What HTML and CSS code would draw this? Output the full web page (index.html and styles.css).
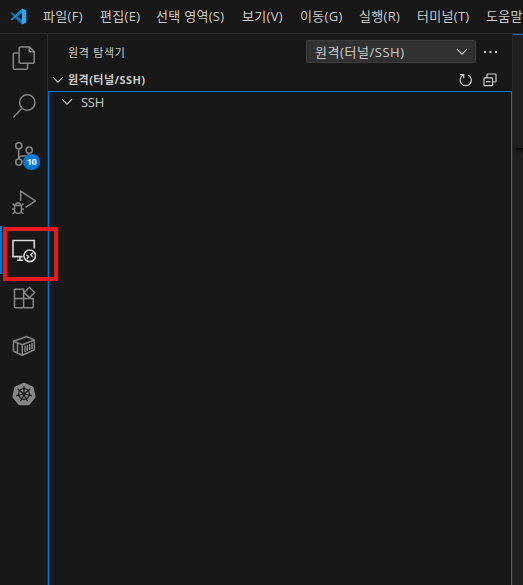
FILE: index.html
```html
<!DOCTYPE html>
<html lang="ko">
<head>
<meta charset="utf-8">
<title>원격 탐색기</title>
<link rel="stylesheet" href="styles.css">
</head>
<body>
<div class="window">
  <header class="titlebar">
    <svg class="logo" width="17" height="17" viewBox="0 0 17 17">
      <path d="M0.5 5.2 1.8 4.2 12 11.9V16.5z" fill="#0879bd"/>
      <path d="M0.5 11.4 1.8 12.5 12 4.8V.4z" fill="#168bd0"/>
      <path d="M12 .4 16.2 2.2V14.8L12 16.5z" fill="#2ca8f2"/>
    </svg>
    <nav class="menu">
      <span>파일(F)</span><span>편집(E)</span><span>선택 영역(S)</span><span>보기(V)</span><span>이동(G)</span><span>실행(R)</span><span>터미널(T)</span><span>도움말</span>
    </nav>
  </header>
  <div class="workbench">
    <aside class="activity">
      <div class="item">
        <svg width="24" height="24" viewBox="0 0 24 24"><path d="M8.2 1H17.5L22.2 5.5V16.3Q22.2 17.3 21.2 17.3H8.2Q7.2 17.3 7.2 16.3V2Q7.2 1 8.2 1zM17.2 1V5.8H22.2M7 7H2.3Q1.3 7 1.3 8V22.2Q1.3 23.2 2.3 23.2H14.5Q15.5 23.2 15.5 22.2V17.5"/></svg>
      </div>
      <div class="item">
        <svg width="24" height="24" viewBox="0 0 24 24"><circle cx="15.3" cy="8.5" r="7.7"/><path d="M10 14.2 1.2 23.4"/></svg>
      </div>
      <div class="item">
        <svg width="24" height="24" viewBox="0 0 24 24"><circle cx="6.8" cy="3.8" r="3.1"/><circle cx="6.8" cy="20.1" r="3.1"/><circle cx="17.2" cy="8.2" r="3.1"/><path d="M6.8 7V17M17.2 11.3Q16.8 14 13 14H10Q7.3 14 6.8 16.8"/></svg>
        <span class="badge">10</span>
      </div>
      <div class="item">
        <svg width="24" height="24" viewBox="0 0 24 24"><path d="M8.7 11V1.1L23.4 11 13.6 17.4"/><path d="M2.6 15.6H9.4V20Q9.4 23.4 6 23.4 2.6 23.4 2.6 20zM3.6 15.4Q3.8 12.8 6 12.8 8.2 12.8 8.4 15.4M0 19H2.5M9.5 19H12M.6 13.6 2.6 15.6M11.4 13.6 9.4 15.6M.6 23.8 3 21.8M11.4 23.8 9 21.8" stroke-width="1.5"/></svg>
      </div>
      <div class="item active">
        <svg width="24" height="24" viewBox="0 0 24 24"><path d="M10.7 17.6H1V1.5H22.3V9.5M5 21.3H11.2M8 17.8V21" stroke-width="1.6"/><circle cx="17.7" cy="16.8" r="5.8" stroke-width="1.6"/><path d="M14.5 15.7 16.7 17.8 14.7 20M20.8 13.7 18.7 15.8 20.8 18" stroke-width="1.3"/></svg>
        <span class="highlight"></span>
      </div>
      <div class="item">
        <svg width="24" height="24" viewBox="0 0 24 24"><path d="M2.5 3.3H11.6V21.8H3.5Q2.5 21.8 2.5 20.8zM2.5 12.6H21.2V20.8Q21.2 21.8 20.2 21.8H11.6M17.4 1.3 22.6 6.5 17.4 11.7 12.2 6.5z"/></svg>
      </div>
      <div class="item">
        <svg width="24" height="24" viewBox="0 0 24 24"><path d="M1.5 7.2 14.5 2.5 22.3 6V15.8L10.3 21.3 1.5 17.2zM1.5 7.2 10.3 10.8 22.3 6M10.3 10.8V21.3M5.5 8.9V19M13.1 11.8V18.1M15.4 10.9V17.1M17.7 10V16.1M20 9V15"/></svg>
      </div>
      <div class="item">
        <svg width="24" height="24" viewBox="0 0 24 24"><path class="kube" d="M12 .4 20.8 4.5Q21.4 4.9 21.6 5.6L23.8 15 17.8 22.6Q17.3 23.2 16.5 23.2H7.5Q6.7 23.2 6.2 22.6L.2 15 2.4 5.6Q2.6 4.9 3.2 4.5z"/><g class="wheel"><circle cx="12" cy="12" r="5.4"/><circle cx="12" cy="12" r="1"/><path d="M12 3.9V11M12 13 8.5 19.3M12 13 15.5 19.3M11 12 4.1 13.8M13 12 19.9 13.8M11.2 11.4 5.7 7M12.8 11.4 18.3 7"/></g></svg>
      </div>
    </aside>
    <main class="sidebar">
      <div class="heading">
        <span class="title">원격 탐색기</span>
        <div class="select"><span>원격(터널/SSH)</span><svg width="12" height="8" viewBox="0 0 12 8"><path d="M1 1.2 6 6.2 11 1.2"/></svg></div>
        <svg class="more" width="14" height="4" viewBox="0 0 14 4"><path d="M0 1H2V3H0zM5.5 1H7.5V3H5.5zM11 1H13V3H11z"/></svg>
      </div>
      <div class="section">
        <svg class="chevron" width="12" height="8" viewBox="0 0 12 8"><path d="M1 1.2 6 6.2 11 1.2"/></svg>
        <strong>원격(터널/SSH)</strong>
        <div class="actions">
          <svg width="14" height="14" viewBox="0 0 14 14"><path d="M1 1.6H4.7V5.2M4.4 2A5.6 5.6 0 1 0 9.2 2"/></svg>
          <svg width="14" height="14" viewBox="0 0 14 14"><path d="M4 4.3V1.7Q4 1 4.7 1H12.3Q13 1 13 1.7V8.3Q13 9 12.3 9H9.8M1.7 4.8H8.9Q9.6 4.8 9.6 5.5V12Q9.6 12.7 8.9 12.7H1.7Q1 12.7 1 12V5.5Q1 4.8 1.7 4.8zM3 8.7H7.6"/></svg>
        </div>
      </div>
      <div class="tree">
        <div class="row"><svg class="chevron" width="12" height="8" viewBox="0 0 12 8"><path d="M1 1.2 6 6.2 11 1.2"/></svg><span>SSH</span></div>
      </div>
    </main>
    <section class="editor"><div class="sticky"></div></section>
  </div>
</div>
</body>
</html>
```
FILE: styles.css
```css
* { box-sizing: border-box; }
body { margin: 0; background: #181818; overflow: hidden; font-family: "Open Sans", "Noto Sans CJK KR", sans-serif; font-size: 13px; color: #ccc; }
svg { display: block; flex: none; fill: none; stroke: #ccc; stroke-width: 1.2; }
.window { width: 523px; height: 585px; display: flex; flex-direction: column; overflow: hidden; }
.titlebar { height: 34px; flex: none; display: flex; align-items: center; border-bottom: 1px solid #2b2b2b; padding: 0 0 2px 10px; }
.logo { stroke: none; margin-top: 1px; }
.menu { display: grid; grid-template-columns: 57px 56px 86px 58px 59px 58px 69px 37px; margin-left: 16px; white-space: nowrap; font-size: 13px; line-height: 20px; letter-spacing: .3px; }
.workbench { display: flex; flex: 1; min-height: 0; }
.activity { width: 48px; flex: none; border-right: 1px solid #2b2b2b; }
.item { height: 48px; position: relative; display: flex; align-items: center; justify-content: center; }
.item svg { stroke: #868686; stroke-width: 1.5; }
.item.active { border-left: 2px solid #0078d4; padding: 1px 2px 0 0; }
.item.active svg { stroke: #d7d7d7; }
.badge { position: absolute; left: 23px; top: 24px; width: 17px; height: 16px; border-radius: 8px; background: #0078d4; color: #fff; font-size: 9px; font-weight: 700; letter-spacing: -.5px; line-height: 16px; text-align: center; }
.highlight { position: absolute; z-index: 2; left: 1px; top: 1px; width: 55px; height: 54px; border: 4px solid #e81919; }
.item .kube { fill: #868686; stroke: none; }
.wheel { stroke: #181818; stroke-width: 1.2; }
.sidebar { width: 464px; flex: none; display: flex; flex-direction: column; }
.heading { height: 35px; flex: none; display: flex; align-items: center; padding-left: 20px; }
.title { font-size: 11px; flex: 1; letter-spacing: .7px; }
.select { width: 170px; height: 23px; background: #313131; border: 1px solid #3c3c3c; border-radius: 2px; display: flex; align-items: center; justify-content: space-between; padding: 0 7px 0 8px; line-height: 20px; letter-spacing: .55px; }
.more { margin: 0 14px 0 8px; fill: #ccc; stroke: none; }
.section { height: 22px; flex: none; display: flex; align-items: center; padding: 0 15px 0 4px; }
.section strong { font-size: 11px; line-height: 16px; margin-left: 4px; padding-bottom: 1px; flex: 1; letter-spacing: .45px; }
.actions { display: flex; gap: 10px; }
.tree { flex: 1; border: 1px solid #0078d4; border-bottom: 0; }
.row { height: 20px; display: flex; align-items: center; padding-left: 12px; gap: 8px; letter-spacing: -.3px; }
.editor { flex: 1; border-left: 1px solid #2b2b2b; background: #1f1f1f; }
.sticky { height: 114px; border-top: 1px solid #0078d4; box-shadow: 3px 2px 3px #000; margin-right: -10px; }
```
